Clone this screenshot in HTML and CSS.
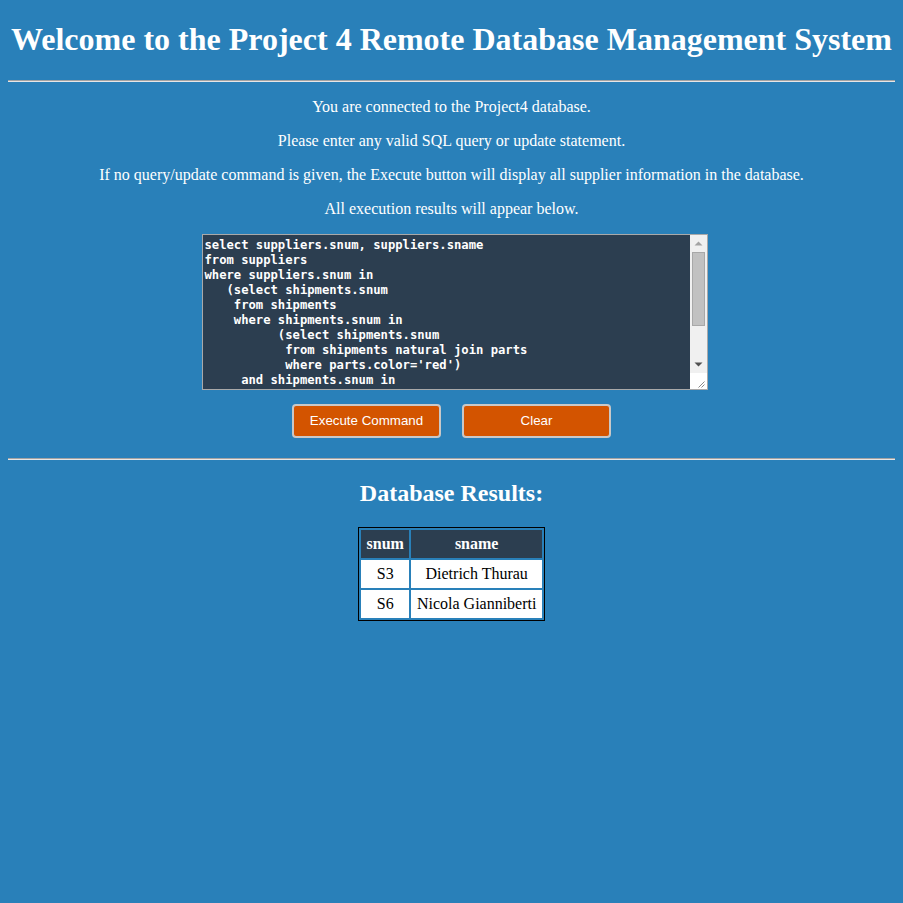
FILE: index.html
```html
<!DOCTYPE html>
<html lang="en">
<head>
<meta charset="utf-8">
<title>Project 4 Remote Database Management System</title>
<link rel="stylesheet" href="styles.css">
</head>
<body>
<h1 class="title">Welcome to the Project 4 Remote Database Management System</h1>
<hr class="rule">
<p class="info">You are connected to the Project4 database.</p>
<p class="info">Please enter any valid SQL query or update statement.</p>
<p class="info">If no query/update command is given, the Execute button will display all supplier information in the database.</p>
<p class="info">All execution results will appear below.</p>
<form class="query-form">
<div class="editor">
<textarea class="query" name="sqlStatement" spellcheck="false">select suppliers.snum, suppliers.sname
from suppliers
where suppliers.snum in
   (select shipments.snum
    from shipments
    where shipments.snum in
          (select shipments.snum
           from shipments natural join parts
           where parts.color='red')
     and shipments.snum in
          (select shipments.snum
           from shipments natural join parts
           where parts.color='green'));</textarea>
<div class="scrollbar" aria-hidden="true">
<div class="sb-btn">
<svg width="17" height="17" viewBox="0 0 17 17"><path d="M4.5 10.5h8l-4-4z" fill="#a3a3a3"/></svg>
</div>
<div class="sb-track"><div class="sb-thumb"></div></div>
<div class="sb-btn">
<svg width="17" height="17" viewBox="0 0 17 17"><path d="M4.5 6.5h8l-4 4z" fill="#505050"/></svg>
</div>
<div class="sb-corner">
<svg width="16" height="16" viewBox="0 0 16 16"><path d="M14.5 8.5l-6 6M14.5 11.5l-3 3" stroke="#8a8a8a" stroke-width="1"/></svg>
</div>
</div>
</div>
<div class="actions">
<button type="button" class="btn">Execute Command</button>
<button type="reset" class="btn">Clear</button>
</div>
</form>
<hr class="rule rule-lower">
<h2 class="results-title">Database Results:</h2>
<table class="results">
<tr><th>snum</th><th>sname</th></tr>
<tr><td>S3</td><td>Dietrich Thurau</td></tr>
<tr><td>S6</td><td>Nicola Gianniberti</td></tr>
</table>
</body>
</html>
```
FILE: styles.css
```css
html {
  background: #2980b9;
}
body {
  margin: 0;
  padding: 0 8px 8px;
  background: #2980b9;
  color: #ffffff;
  font-family: "Liberation Serif", "Times New Roman", serif;
  font-size: 16px;
  text-align: center;
}
.title {
  font-size: 32px;
  font-weight: bold;
  margin: 21.44px 0;
}
.rule {
  margin: 8px 0;
  border: none;
  border-top: 1px solid #a3a3a3;
  border-bottom: 1px solid #e6e6e6;
  height: 0;
}
.info {
  margin: 16px 0;
}
.query-form {
  margin: 0;
}
.editor {
  position: relative;
  left: 3px;
  width: 506px;
  height: 156px;
  margin: 0 auto;
}
.query {
  display: block;
  box-sizing: border-box;
  width: 100%;
  height: 100%;
  margin: 0;
  padding: 3px 20px 0 2px;
  border: 1px solid #a9a9a9;
  background: #2c3e50;
  color: #ffffff;
  font-family: "DejaVu Sans Mono", monospace;
  font-weight: bold;
  font-size: 12.2px;
  line-height: 15px;
  text-align: left;
  white-space: pre;
  overflow: hidden;
  resize: none;
  outline: none;
}
.scrollbar {
  position: absolute;
  top: 1px;
  right: 1px;
  bottom: 1px;
  width: 17px;
  display: flex;
  flex-direction: column;
  background: #f0f0f0;
}
.sb-btn {
  height: 17px;
  flex: none;
}
.sb-btn svg,
.sb-corner svg {
  display: block;
}
.sb-track {
  flex: 1;
  padding: 0 2px;
}
.sb-thumb {
  height: 74px;
  background: #c1c1c1;
  box-shadow: inset 0 0 0 1px #a8a8a8;
}
.sb-corner {
  height: 16px;
  flex: none;
  background: #ffffff;
}
.actions {
  display: flex;
  justify-content: center;
  gap: 21px;
  margin-top: 14px;
}
.btn {
  box-sizing: border-box;
  width: 149px;
  height: 34px;
  background: #d35400;
  color: #ffffff;
  border: 2px solid #c8c8c8;
  border-radius: 4px;
  font-family: "Liberation Sans", Arial, sans-serif;
  font-size: 13.33px;
  padding: 0;
  cursor: pointer;
}
.rule-lower {
  margin-top: 20px;
}
.results-title {
  font-size: 24px;
  font-weight: bold;
  margin: 19.92px 0;
}
.results {
  margin: 0 auto;
  border: 1px solid #000000;
  border-spacing: 2px;
}
.results th,
.results td {
  padding: 5px 5.5px;
  text-align: center;
}
.results th {
  background: #2c3e50;
  color: #ffffff;
  font-weight: bold;
}
.results td {
  background: #ffffff;
  color: #000000;
}
```
